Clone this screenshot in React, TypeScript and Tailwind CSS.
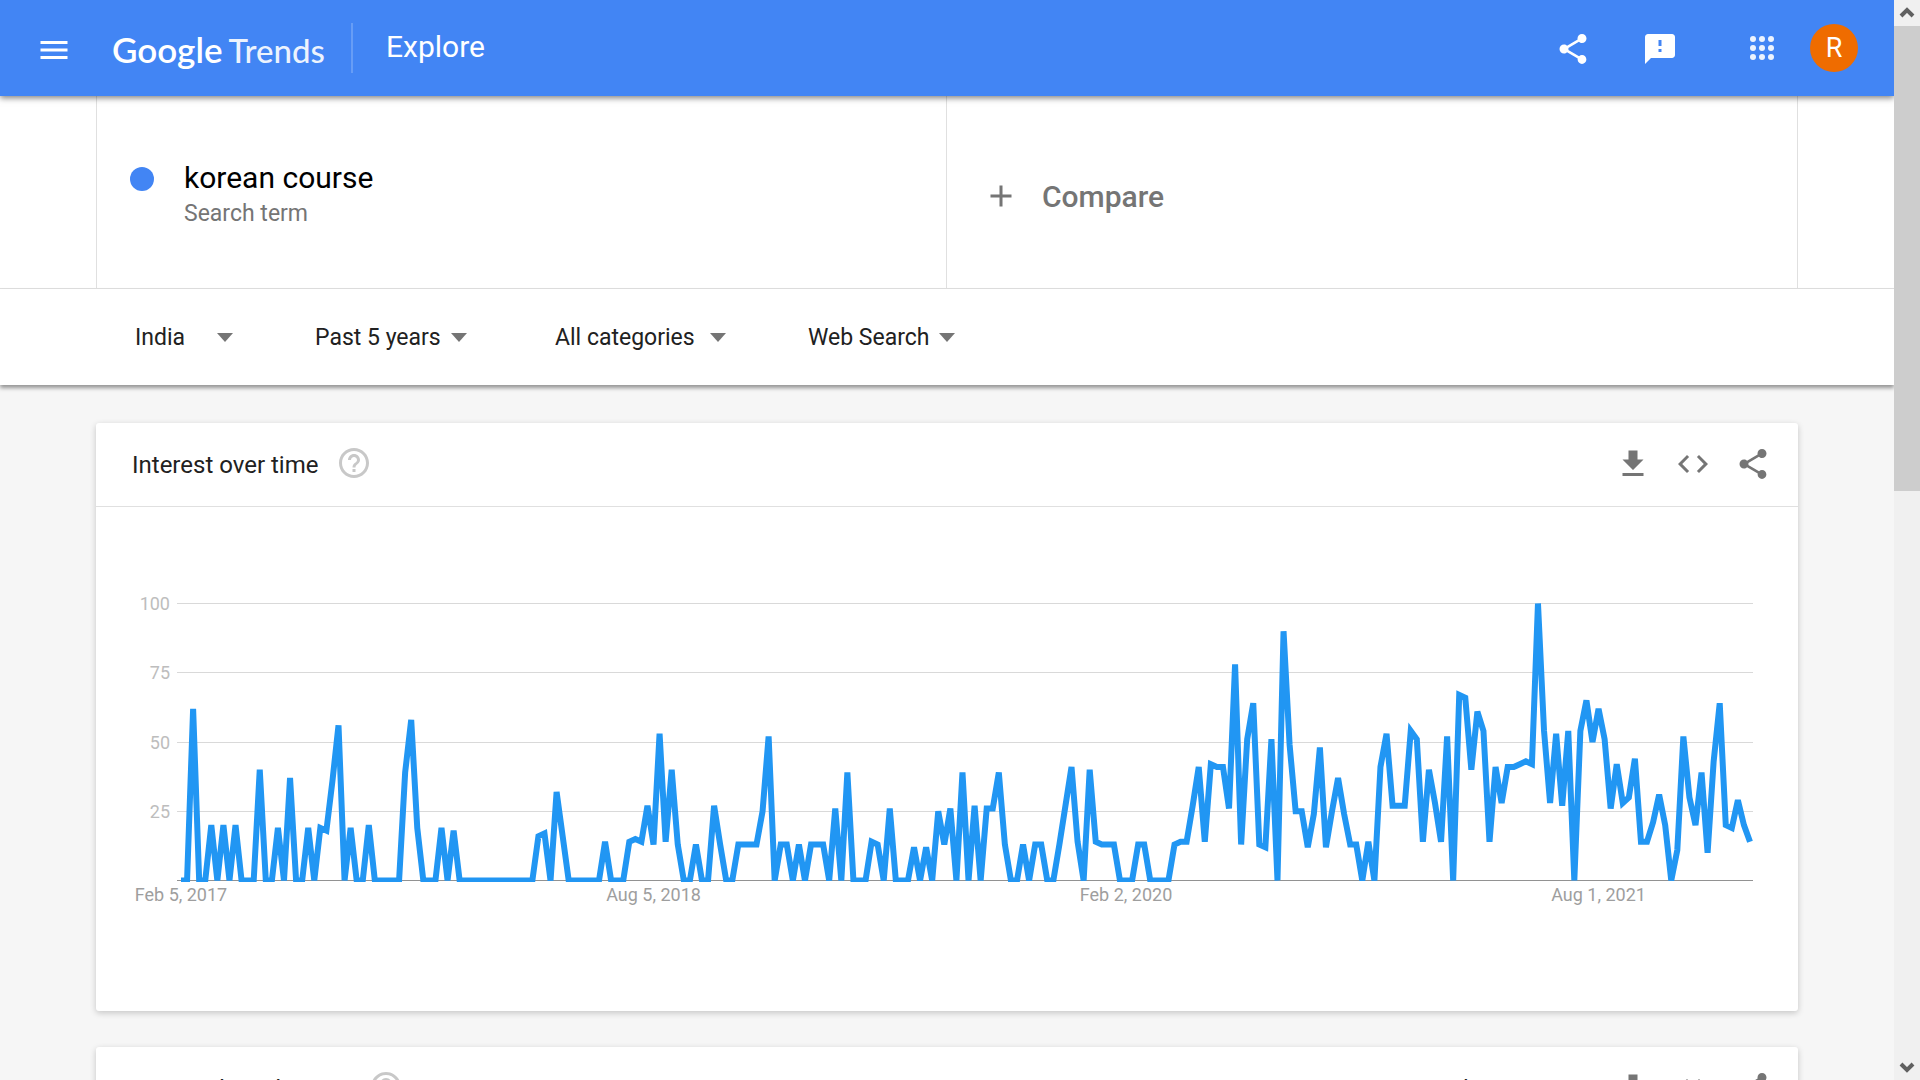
import type { ReactNode } from "react";

const SHARE =
  "M18 16.08c-.76 0-1.44.3-1.96.77L8.91 12.7c.05-.23.09-.46.09-.7s-.04-.47-.09-.7l7.05-4.11c.54.5 1.25.81 2.04.81 1.66 0 3-1.34 3-3s-1.34-3-3-3-3 1.34-3 3c0 .24.04.47.09.7L8.04 9.81C7.5 9.31 6.79 9 6 9c-1.66 0-3 1.34-3 3s1.34 3 3 3c.79 0 1.5-.31 2.04-.81l7.12 4.16c-.05.21-.08.43-.08.65 0 1.61 1.31 2.92 2.92 2.92s2.92-1.31 2.92-2.92-1.31-2.92-2.92-2.92z";
const MENU = "M3 18h18v-2H3v2zm0-5h18v-2H3v2zm0-7v2h18V6H3z";
const FEEDBACK =
  "M20 2H4c-1.1 0-1.99.9-1.99 2L2 22l4-4h14c1.1 0 2-.9 2-2V4c0-1.1-.9-2-2-2zm-7 12h-2v-2h2v2zm0-4h-2V6h2v4z";
const DOWNLOAD = "M19 9h-4V3H9v6H5l7 7 7-7zM5 18v2h14v-2H5z";
const CODE =
  "M9.4 16.6L4.8 12l4.6-4.6L8 6l-6 6 6 6 1.4-1.4zm5.2 0l4.6-4.6-4.6-4.6L16 6l6 6-6 6-1.4-1.4z";
const ADD = "M19 13h-6v6h-2v-6H5v-2h6V5h2v6h6v2z";
const HELP =
  "M11 18h2v-2h-2v2zm1-16C6.48 2 2 6.48 2 12s4.48 10 10 10 10-4.48 10-10S17.52 2 12 2zm0 18c-4.41 0-8-3.59-8-8s3.59-8 8-8 8 3.59 8 8-3.59 8-8 8zm0-14c-2.21 0-4 1.79-4 4h2c0-1.1.9-2 2-2s2 .9 2 2c0 2-3 1.75-3 5h2c0-2.25 3-2.5 3-5 0-2.21-1.79-4-4-4z";

function Icon({ d }: { d: string }) {
  return (
    <svg viewBox="0 0 24 24" className="block size-9 shrink-0 fill-current" aria-hidden="true">
      <path d={d} />
    </svg>
  );
}

function IconButton({ label, d }: { label: string; d: string }) {
  return (
    <button type="button" aria-label={label}>
      <Icon d={d} />
    </button>
  );
}

function Header() {
  return (
    <header className="relative z-10 flex h-24 items-center bg-[#4285f4] pr-9 pl-9 text-white shadow-[0_2px_6px_rgba(0,0,0,0.5)]">
      <div className="flex items-center pt-1">
        <IconButton label="Main menu" d={MENU} />
      </div>
      <a
        href="#home"
        className="ml-10 flex w-[215px] items-baseline gap-1.5 pt-0.5 font-[Lato,sans-serif] text-[35px] leading-[44px] whitespace-nowrap"
      >
        <span className="font-semibold">Google</span>
        <span className="text-[33px] font-medium opacity-90">Trends</span>
      </a>
      <div className="ml-6 h-[50px] w-0.5 bg-white/20" />
      <h1 className="ml-[33px] pb-0.5 text-3xl">Explore</h1>
      <div className="ml-auto flex items-center">
        <div className="flex items-center gap-[51px] pt-0.5">
          <IconButton label="Share" d={SHARE} />
          <IconButton label="Send feedback" d={FEEDBACK} />
        </div>
        <button type="button" aria-label="Google apps" className="ml-[72px]">
          <svg viewBox="0 0 24 24" className="block size-6 fill-white/90" aria-hidden="true">
            {[3, 12, 21].map((cy) => [3, 12, 21].map((cx) => <circle key={`${cx}-${cy}`} cx={cx} cy={cy} r="3" />))}
          </svg>
        </button>
        <button
          type="button"
          aria-label="Account"
          className="ml-9 size-12 rounded-full bg-[#ef6c00] text-center text-[27px] leading-[48px]"
        >
          R
        </button>
      </div>
    </header>
  );
}

function Terms() {
  return (
    <section className="border-b border-[#e0e0e0] bg-white px-24">
      <div className="grid h-48 grid-cols-2 border-x border-[#e0e0e0]">
        <div className="flex border-r border-[#e0e0e0] pt-16 pl-[33px]">
          <span className="mt-[7px] size-6 rounded-full bg-[#4285f4]" />
          <div className="ml-[30px]">
            <div className="text-[30px] leading-[36px] text-black">korean course</div>
            <div className="text-[23px] leading-[36px] text-[#757575]">Search term</div>
          </div>
        </div>
        <button type="button" className="flex items-center pt-2.5 pl-9 text-left text-[#757575]">
          <span className="pb-0.5">
            <Icon d={ADD} />
          </span>
          <span className="ml-[23px] text-[30px] leading-[36px] font-medium">Compare</span>
        </button>
      </div>
    </section>
  );
}

function Filter({ label, options, className }: { label: string; options: string[]; className: string }) {
  return (
    <div className={`relative ${className}`}>
      <select
        aria-label={label}
        className="block w-full appearance-none bg-transparent text-[23px] leading-8 text-[#212121]"
      >
        {options.map((o) => (
          <option key={o}>{o}</option>
        ))}
      </select>
      <svg
        viewBox="0 0 16 9"
        className="pointer-events-none absolute top-[11px] right-0 h-[9px] w-4 fill-[#757575]"
        aria-hidden="true"
      >
        <path d="M0 0h16L8 9z" />
      </svg>
    </div>
  );
}

function Filters() {
  return (
    <section className="relative flex h-24 items-center bg-white pt-0.5 pl-[135px] shadow-[0_3px_4px_rgba(0,0,0,0.4)]">
      <Filter label="Region" options={["India", "Worldwide"]} className="mr-[82px] w-[98px]" />
      <Filter label="Time range" options={["Past 5 years", "Past day"]} className="mr-[88px] w-[152px]" />
      <Filter label="Category" options={["All categories", "Games"]} className="mr-[82px] w-[171px]" />
      <Filter label="Search property" options={["Web Search", "Image Search"]} className="w-[147px]" />
    </section>
  );
}

function Card({
  title,
  helpGap = "ml-[18px]",
  extra,
  children,
}: {
  title: string;
  helpGap?: string;
  extra?: ReactNode;
  children?: ReactNode;
}) {
  return (
    <section className="mx-24 mb-9 rounded-[3px] bg-white shadow-[0_2px_6px_rgba(0,0,0,0.2)]">
      <div className="flex h-[84px] items-center border-b border-[#e0e0e0] pr-[27px] pl-9">
        <h2 className="text-2xl text-[#212121]">{title}</h2>
        <div className={`flex pb-[3px] text-[#c8c8c8] ${helpGap}`}>
          <IconButton label="Help" d={HELP} />
        </div>
        <div className="ml-auto flex items-center gap-6 pb-px text-[#757575]">
          {extra}
          <IconButton label="Download CSV" d={DOWNLOAD} />
          <IconButton label="Embed" d={CODE} />
          <IconButton label="Share" d={SHARE} />
        </div>
      </div>
      {children}
    </section>
  );
}

// Weekly interest values, starting Feb 5, 2017.
const VALUES = [
  0, 0, 62, 0, 0, 20, 0, 20, 0, 20, 0, 0, 0, 40, 0, 0, 19, 0, 37, 0,
  0, 19, 0, 19, 18, 36, 56, 0, 19, 0, 0, 20, 0, 0, 0, 0, 0, 39, 58, 19,
  0, 0, 0, 19, 0, 18, 0, 0, 0, 0, 0, 0, 0, 0, 0, 0, 0, 0, 0, 16,
  17, 0, 32, 16, 0, 0, 0, 0, 0, 0, 14, 0, 0, 0, 14, 15, 14, 27, 13, 53,
  14, 40, 13, 0, 0, 13, 0, 0, 27, 13, 0, 0, 13, 13, 13, 13, 25, 52, 0, 13,
  13, 0, 13, 0, 13, 13, 13, 0, 26, 0, 39, 0, 0, 0, 14, 13, 0, 26, 0, 0,
  0, 12, 0, 12, 0, 25, 13, 26, 0, 39, 0, 27, 0, 26, 26, 39, 13, 0, 0, 13,
  0, 13, 13, 0, 0, 13, 27, 41, 14, 0, 40, 14, 13, 13, 13, 0, 0, 0, 13, 13,
  0, 0, 0, 0, 13, 14, 14, 27, 41, 14, 42, 41, 41, 26, 78, 13, 51, 64, 13, 12,
  51, 0, 90, 49, 25, 25, 12, 24, 48, 12, 25, 37, 24, 13, 13, 0, 14, 0, 41, 53,
  27, 27, 27, 54, 51, 14, 40, 28, 14, 52, 0, 67, 66, 40, 61, 54, 14, 41, 28, 41,
  41, 42, 43, 42, 100, 54, 28, 53, 27, 54, 0, 54, 65, 50, 62, 51, 26, 42, 28, 30,
  44, 14, 14, 21, 31, 20, 0, 11, 52, 30, 20, 39, 10, 43, 64, 20, 19, 29, 20, 14,
];

const START = 85;
const END = 1654;
const TOP = 96.5;
const BASE = 373.5;
const xOf = (i: number) => START + (i * (END - START)) / (VALUES.length - 1);
const yOf = (v: number) => BASE - (v * (BASE - TOP)) / 100;

const GRID = [
  { value: 100, y: 96 },
  { value: 75, y: 165 },
  { value: 50, y: 235 },
  { value: 25, y: 304 },
];
const DATES = [
  { index: 0, text: "Feb 5, 2017" },
  { index: 78, text: "Aug 5, 2018" },
  { index: 156, text: "Feb 2, 2020" },
  { index: 234, text: "Aug 1, 2021" },
];

function TrendChart() {
  return (
    <svg viewBox="0 0 1702 504" className="block h-auto w-full" role="img" aria-label="Interest over time">
      <defs>
        <clipPath id="plot">
          <rect x="81" y="96" width="1576" height="279" />
        </clipPath>
      </defs>
      {GRID.map((g) => (
        <g key={g.value}>
          <rect x="81" y={g.y} width="1576" height="1" fill="#d9d9d9" />
          <text x="74" y={g.y + 7} textAnchor="end" fontSize="18" fill="#bdbdbd">
            {g.value}
          </text>
        </g>
      ))}
      <rect x="81" y="373" width="1576" height="1" fill="#929292" />
      <polyline
        clipPath="url(#plot)"
        points={VALUES.map((v, i) => `${xOf(i)},${yOf(v)}`).join(" ")}
        fill="none"
        stroke="#2196f3"
        strokeWidth="6"
      />
      {DATES.map((t) => (
        <text key={t.text} x={xOf(t.index)} y="394" textAnchor="middle" fontSize="18" fill="#9e9e9e">
          {t.text}
        </text>
      ))}
    </svg>
  );
}

function Scrollbar() {
  return (
    <div className="flex w-[26px] shrink-0 flex-col bg-[#f0f0f0] text-[#606060]" aria-hidden="true">
      <svg viewBox="0 0 26 26" className="block h-[26px]">
        <path d="M7 16l6-6 6 6" fill="none" stroke="currentColor" strokeWidth="4" />
      </svg>
      <div className="flex grow flex-col">
        <div className="h-[45.2%] bg-[#cdcdcd]" />
      </div>
      <svg viewBox="0 0 26 26" className="block h-[26px]">
        <path d="M7 10l6 6 6-6" fill="none" stroke="currentColor" strokeWidth="4" />
      </svg>
    </div>
  );
}

export default function App() {
  return (
    <div className="flex h-screen overflow-hidden bg-[#f6f6f6] font-[Roboto,sans-serif]">
      <div className="min-w-0 grow overflow-hidden">
        <Header />
        <Terms />
        <Filters />
        <main className="pt-[38px]">
          <Card title="Interest over time">
            <TrendChart />
          </Card>
          <Card
            title="Interest by subregion"
            helpGap="ml-3"
            extra={<Filter label="Resolution" options={["Subregion", "City"]} className="mr-3 w-[142px] pt-1" />}
          />
        </main>
      </div>
      <Scrollbar />
    </div>
  );
}
